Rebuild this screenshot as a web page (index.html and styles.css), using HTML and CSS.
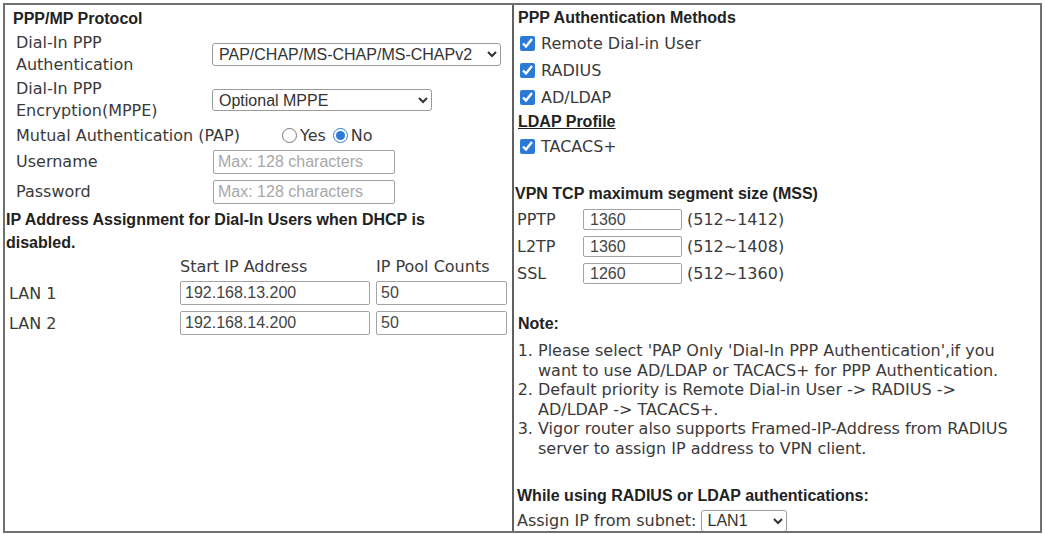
FILE: index.html
```html
<!DOCTYPE html>
<html lang="en">
<head>
    <meta charset="UTF-8">
    <meta name="viewport" content="width=device-width, initial-scale=1.0">
    <title>PPP General Setup</title>
    <link rel="stylesheet" href="styles.css">
</head>
<body>
    <div class="frame">
        <div class="col col-left">
            <div class="head head-ppp">PPP/MP Protocol</div>

            <div class="row row-tall">
                <label class="lbl" for="authType">Dial-In PPP Authentication</label>
                <select id="authType" class="sel sel-auth">
                    <option>PAP/CHAP/MS-CHAP/MS-CHAPv2</option>
                    <option>PAP Only</option>
                </select>
            </div>
            <div class="row row-tall">
                <label class="lbl" for="mppe">Dial-In PPP Encryption(MPPE)</label>
                <select id="mppe" class="sel sel-mppe">
                    <option>Optional MPPE</option>
                    <option>Require MPPE(40/128bit)</option>
                </select>
            </div>
            <div class="row row-mutual">
                <span class="lbl-wide">Mutual Authentication (PAP)</span>
                <label class="opt"><input type="radio" name="mutual">Yes</label>
                <label class="opt"><input type="radio" name="mutual" checked>No</label>
            </div>
            <div class="row row-field">
                <label class="lbl" for="user">Username</label>
                <input id="user" class="txt txt-cred" type="text" placeholder="Max: 128 characters">
            </div>
            <div class="row row-field">
                <label class="lbl" for="pass">Password</label>
                <input id="pass" class="txt txt-cred" type="text" placeholder="Max: 128 characters">
            </div>

            <div class="head head-ip">IP Address Assignment for Dial-In Users when DHCP is disabled.</div>

            <div class="pool">
                <span></span>
                <span class="pool-head">Start IP Address</span>
                <span class="pool-head">IP Pool Counts</span>

                <span class="pool-lan">LAN 1</span>
                <input class="txt" type="text" value="192.168.13.200">
                <input class="txt" type="text" value="50">

                <span class="pool-lan">LAN 2</span>
                <input class="txt" type="text" value="192.168.14.200">
                <input class="txt" type="text" value="50">
            </div>
        </div>

        <div class="col col-right">
            <div class="head head-auth">PPP Authentication Methods</div>
            <label class="check"><input type="checkbox" checked>Remote Dial-in User</label>
            <label class="check"><input type="checkbox" checked>RADIUS</label>
            <label class="check"><input type="checkbox" checked>AD/LDAP</label>
            <div class="head ldap"><a href="#">LDAP Profile</a></div>
            <label class="check"><input type="checkbox" checked>TACACS+</label>

            <div class="head head-mss">VPN TCP maximum segment size (MSS)</div>
            <div class="mss">
                <span>PPTP</span>
                <input class="txt" type="text" value="1360">
                <span>(512~1412)</span>

                <span>L2TP</span>
                <input class="txt" type="text" value="1360">
                <span>(512~1408)</span>

                <span>SSL</span>
                <input class="txt" type="text" value="1260">
                <span>(512~1360)</span>
            </div>

            <div class="head head-note">Note:</div>
            <ol class="notes">
                <li>Please select 'PAP Only 'Dial-In PPP Authentication',if you want to use AD/LDAP or TACACS+ for PPP Authentication.</li>
                <li>Default priority is Remote Dial-in User -&gt; RADIUS -&gt; AD/LDAP -&gt; TACACS+.</li>
                <li>Vigor router also supports Framed-IP-Address from RADIUS server to assign IP address to VPN client.</li>
            </ol>

            <div class="head head-while">While using RADIUS or LDAP authentications:</div>
            <div class="assign">
                <label for="subnet">Assign IP from subnet:</label>
                <select id="subnet" class="sel sel-subnet">
                    <option>LAN1</option>
                    <option>LAN2</option>
                </select>
            </div>
        </div>
    </div>
</body>
</html>
```

FILE: styles.css
```css
body {
    margin: 0;
    font-family: "DejaVu Sans", Verdana, sans-serif;
    font-size: 16px;
    color: #3a3a3a;
    background: #fff;
}

.frame {
    display: flex;
    margin: 3px 3px 0;
    height: 530px;
    box-sizing: border-box;
    border: 2px solid #707070;
}

.col {
    overflow: hidden;
}

.col-left {
    width: 507px;
    flex-shrink: 0;
    border-right: 2px solid #606060;
}

.col-right {
    flex: 1;
    padding: 0 16px 0 4px;
}

.head {
    font-family: "Liberation Sans", Arial, sans-serif;
    font-weight: bold;
    color: #222;
    line-height: 24px;
}

/* left column */

.head-ppp {
    padding: 2px 0 0 8px;
}

.row {
    display: flex;
    align-items: center;
    padding-left: 11px;
}

.row-tall {
    height: 46px;
}

.row-mutual {
    height: 24px;
}

.row-field {
    height: 30px;
}

.lbl {
    width: 196px;
    flex-shrink: 0;
    line-height: 22px;
}

.lbl-wide {
    width: 266px;
    flex-shrink: 0;
}

.opt {
    display: flex;
    align-items: center;
    margin-right: 7px;
}

.opt input {
    width: 15px;
    height: 15px;
    margin: 0 3px 0 0;
    accent-color: #2a7ad6;
}

.sel {
    font-family: "Liberation Sans", Arial, sans-serif;
    font-size: 16px;
    color: #333;
    background: #fff;
    border: 1px solid #9a9a9a;
    border-radius: 3px;
    padding: 0 2px;
}

.sel-auth {
    width: 289px;
    height: 23px;
}

.sel-mppe {
    width: 220px;
    height: 22px;
}

.txt {
    box-sizing: border-box;
    font-family: "Liberation Sans", Arial, sans-serif;
    font-size: 16px;
    color: #444;
    border: 1px solid #a3a3a3;
    border-radius: 2px;
    padding: 0 4px;
    margin: 0;
}

.txt::placeholder {
    color: #a8a8a8;
}

.txt-cred {
    width: 182px;
    height: 24px;
    margin-left: 1px;
}

.head-ip {
    width: 470px;
    padding-left: 1px;
    margin-top: 1px;
    line-height: 23px;
}

.pool {
    display: grid;
    grid-template-columns: 165px 190px 131px;
    grid-template-rows: 24px 30px 30px;
    column-gap: 6px;
    align-items: center;
    padding-left: 4px;
}

.pool .txt {
    width: 100%;
    height: 24px;
}

/* right column */

.head-auth {
    padding-top: 1px;
}

.check {
    display: flex;
    align-items: center;
    height: 27px;
}

.check input {
    width: 15px;
    height: 15px;
    margin: 0 6px 0 2px;
    accent-color: #2a7ad6;
}

.ldap {
    height: 22px;
    line-height: 22px;
}

.ldap a {
    color: #222;
}

.head-mss {
    margin-top: 22px;
    margin-left: -3px;
}

.mss {
    display: grid;
    grid-template-columns: 61px 99px auto;
    grid-auto-rows: 27px;
    column-gap: 5px;
    align-items: center;
    margin-left: -1px;
}

.mss .txt {
    width: 100%;
    height: 21px;
    padding-left: 6px;
}

.head-note {
    margin-top: 27px;
    line-height: 20px;
}

.notes {
    margin: 7px 0 0;
    padding-left: 20px;
    line-height: 19.6px;
}

.head-while {
    margin-top: 25px;
    margin-left: -1px;
}

.assign {
    display: flex;
    align-items: center;
    height: 26px;
    margin-left: -1px;
}

.sel-subnet {
    width: 86px;
    height: 22px;
    margin-left: 4px;
}
```
